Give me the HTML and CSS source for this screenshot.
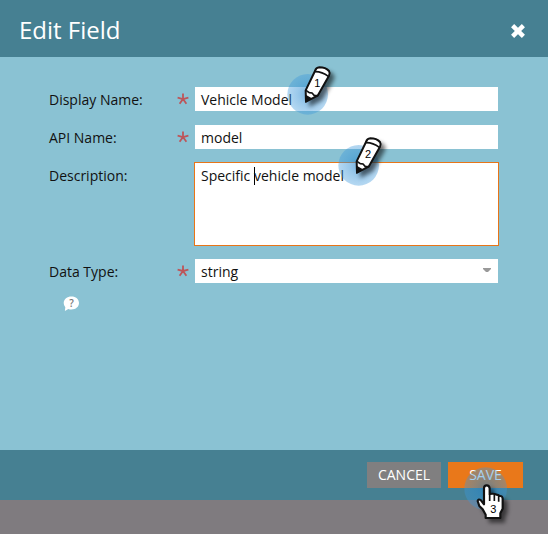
FILE: index.html
```html
<!DOCTYPE html>
<html lang="en">
<head>
<meta charset="utf-8">
<title>Edit Field</title>
<link rel="stylesheet" href="styles.css">
</head>
<body>
<svg class="defs" width="0" height="0" aria-hidden="true">
  <defs>
    <radialGradient id="halo" cx="50%" cy="50%" r="50%">
      <stop offset="0" stop-color="#2080c8" stop-opacity=".6"/>
      <stop offset=".5" stop-color="#2f8fd5" stop-opacity=".48"/>
      <stop offset="1" stop-color="#3c98dc" stop-opacity=".38"/>
    </radialGradient>
    <filter id="soft" x="-50%" y="-50%" width="220%" height="220%"><feGaussianBlur stdDeviation="7"/></filter>
    <path id="barrel" d="M78 125L77 91L105 33Q108 23 118 22Q137 22 147 33Q151 39 147 47L113 107Z"/>
    <path id="hand" d="M95 106Q87 106 87 115V163L78 151Q70 145 68 153L73 168L83 178L92 194V204H136V190L143 176V146Q142 137 134 138Q130 134 124 134Q118 130 104 132V115Q103 106 95 106Z"/>
    <g id="pencil">
      <circle cx="83" cy="103" r="61" fill="url(#halo)"/>
      <use href="#barrel" class="shade" transform="translate(12 12)"/>
      <use href="#barrel" fill="#fff" stroke="#111" stroke-width="6" stroke-linejoin="round"/>
      <path d="M78 91L88 98L96 99L103 107L113 107M104 35Q125 34 145 49" fill="none" stroke="#111" stroke-width="5"/>
      <path d="M78 125V107L92 115Z" fill="#111" stroke="#111" stroke-width="4"/>
    </g>
  </defs>
</svg>
<div class="dialog">
  <header class="header">
    <h1>Edit Field</h1>
    <svg class="close" width="14" height="14" viewBox="0 0 14 14"><path d="M1.6 1.6L12.4 12.4M12.4 1.6L1.6 12.4"/></svg>
  </header>
  <main class="form">
    <div class="row"><span class="label">Display Name:</span><svg class="req" viewBox="0 0 12 12"><use href="#star"/></svg><div class="input">Vehicle Model</div></div>
    <div class="row"><span class="label">API Name:</span><svg class="req" viewBox="0 0 12 12"><path id="star" d="M6 6V.5M6 6L.6 4.7M6 6L11.4 4.7M6 6L2.6 10.8M6 6L9.4 10.8"/></svg><div class="input">model</div></div>
    <div class="row area-row"><span class="label">Description:</span><div class="area">Specific <i class="caret"></i>vehicle model</div></div>
    <div class="row"><span class="label">Data Type:</span><svg class="req" viewBox="0 0 12 12"><use href="#star"/></svg><div class="input select">string<svg width="9" height="5" viewBox="0 0 9 5"><path d="M0 0H8V1L5 4H3L0 1Z" fill="#999"/></svg></div></div>
    <svg class="help" width="17" height="16" viewBox="0 0 17 16"><path d="M8.5 .5C12.8 .5 16 3.2 16 7S12.8 13.4 8.5 13.4Q6.7 13.4 5.3 12.9L1.9 15L2.3 11.2Q.7 9.5 .7 7C.7 3.2 4.2 .5 8.5 .5Z" fill="#fff"/><text x="8.6" y="11" text-anchor="middle">?</text></svg>
  </main>
  <footer class="footer">
    <div class="button cancel">CANCEL</div>
    <div class="button save">SAVE</div>
  </footer>
</div>
<svg class="marker first" viewBox="0 0 180 180"><use href="#pencil"/><text x="112" y="80" text-anchor="middle">1</text></svg>
<svg class="marker second" viewBox="0 0 180 180"><use href="#pencil"/><text x="111" y="80" text-anchor="middle">2</text></svg>
<svg class="marker third" viewBox="0 0 210 240">
  <circle cx="92" cy="116" r="64" fill="url(#halo)"/>
  <use href="#hand" class="shade" transform="translate(12 12)"/>
  <use href="#hand" fill="#fff" stroke="#111" stroke-width="6.5" stroke-linejoin="round"/>
  <path d="M104 132V153M118 134V153M131 138V155" fill="none" stroke="#111" stroke-width="5"/>
  <text x="115" y="189" text-anchor="middle">3</text>
</svg>
</body>
</html>
```
FILE: styles.css
```css
body {
  margin: 0;
  height: 534px;
  overflow: hidden;
  background: #7f7b7f;
  font: 14px/24px "Open Sans", sans-serif;
  color: #111;
}
.defs { position: absolute; }
.dialog {
  display: flex;
  flex-direction: column;
  height: 500px;
  background: #8ac2d3;
}
.header {
  display: flex;
  align-items: center;
  justify-content: space-between;
  box-sizing: border-box;
  height: 57px;
  padding: 4px 23px 0 19px;
  background: #468092;
}
h1 {
  margin: -2px 0 0;
  color: #fff;
  font-size: 24px;
  font-weight: 400;
  line-height: 32px;
}
.close { stroke: #fff; stroke-width: 4.4; }
.form { flex: 1; padding: 30px 50px 0 49px; }
.row { display: flex; height: 24px; margin-bottom: 14px; }
.label { width: 128px; padding-top: 1px; }
.req {
  width: 12px;
  height: 12px;
  margin: 6px 6px 0 0;
  fill: none;
  stroke: #bd5559;
  stroke-width: 1.8;
}
.input {
  flex: 1;
  padding: 1px 6px 0;
  height: 23px;
  background: #fff;
}
.area-row { height: 83px; margin-bottom: 13px; }
.area {
  box-sizing: border-box;
  width: 305px;
  height: 84px;
  margin: -1px -1px 0 17px;
  padding: 1px 6px;
  border: 1px solid #e87518;
  background: #fff;
}
.caret {
  display: inline-block;
  width: 1px;
  height: 18px;
  margin-right: -1px;
  background: #000;
  vertical-align: -4px;
}
.select { display: flex; justify-content: space-between; }
.select svg { margin-top: 8px; }
.help { display: block; margin: -1px 0 0 14px; }
.help text { font: 600 10px "Open Sans", sans-serif; fill: #777; }
.footer {
  display: flex;
  justify-content: flex-end;
  gap: 7px;
  box-sizing: border-box;
  height: 50px;
  padding: 12px 25px 0 0;
  background: #468092;
}
.button {
  width: 74px;
  height: 26px;
  color: #fff;
  line-height: 26px;
  text-align: center;
}
.cancel { background: #807f80; }
.save { width: 75px; background: #e9781a; }
.marker { position: absolute; width: 60px; height: 60px; overflow: visible; }
.marker text { font: 33px "Liberation Sans", sans-serif; fill: #000; }
.shade { fill: #000; stroke: #000; stroke-width: 5; opacity: .55; filter: url(#soft); }
.first { left: 280px; top: 60px; }
.second { left: 331px; top: 131px; }
.third { left: 455px; top: 450px; width: 70px; height: 80px; }
```
